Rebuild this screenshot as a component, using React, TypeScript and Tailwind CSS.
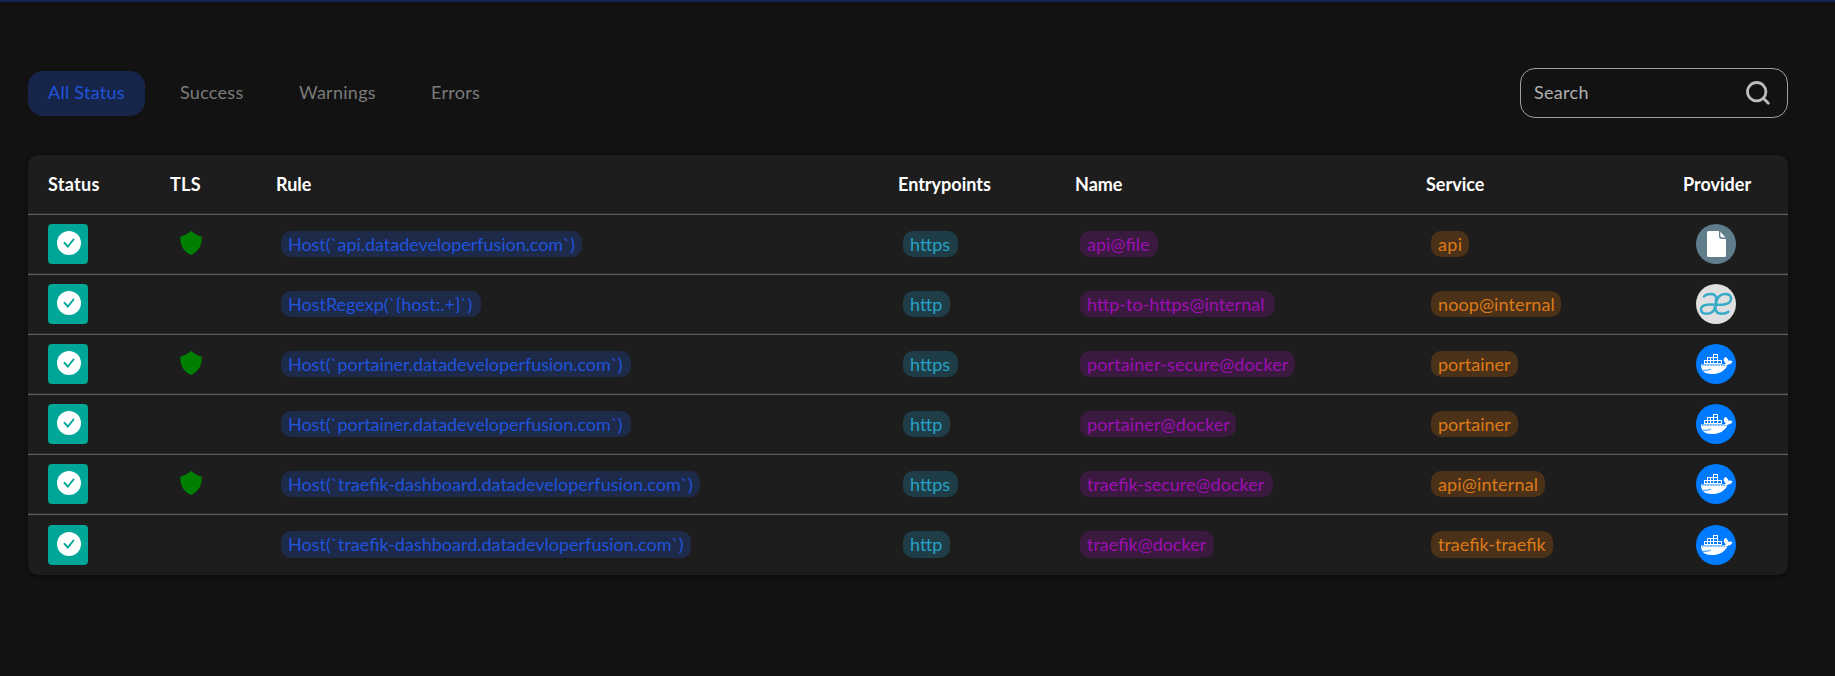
import React from "react";

const tabs = [
  { label: "All Status", cls: "w-[117px] pl-5 bg-[#18254b] text-[#1f55dc]" },
  { label: "Success", cls: "w-[103px] pl-5 text-[#7b7b7b]" },
  { label: "Warnings", cls: "w-[117px] pl-[21px] text-[#7b7b7b]" },
  { label: "Errors", cls: "w-[87px] pl-[21px] text-[#7b7b7b]" },
];

type Chip = [label: string, width: string];
type Row = { tls: boolean; rule: Chip; entry: Chip; name: Chip; service: Chip; provider: "file" | "internal" | "docker" };

const https: Chip = ["https", "w-[55px]"];
const http: Chip = ["http", "w-[47px]"];

const rows: Row[] = [
  { tls: true, rule: ["Host(`api.datadeveloperfusion.com`)", "w-[301px] tracking-[-0.05px]"], entry: https, name: ["api@file", "w-[78px]"], service: ["api", "w-[38px] tracking-[0.3px]"], provider: "file" },
  { tls: false, rule: ["HostRegexp(`{host:.+}`)", "w-[200px]"], entry: http, name: ["http-to-https@internal", "w-[195px]"], service: ["noop@internal", "w-[130px] tracking-[0.1px]"], provider: "internal" },
  { tls: true, rule: ["Host(`portainer.datadeveloperfusion.com`)", "w-[350px] tracking-[-0.07px]"], entry: https, name: ["portainer-secure@docker", "w-[215px] tracking-[0.1px]"], service: ["portainer", "w-[87px]"], provider: "docker" },
  { tls: false, rule: ["Host(`portainer.datadeveloperfusion.com`)", "w-[350px] tracking-[-0.07px]"], entry: http, name: ["portainer@docker", "w-[156px] tracking-[0.1px]"], service: ["portainer", "w-[87px]"], provider: "docker" },
  { tls: true, rule: ["Host(`traefik-dashboard.datadeveloperfusion.com`)", "w-[419px]"], entry: https, name: ["traefik-secure@docker", "w-[193px]"], service: ["api@internal", "w-[114px] tracking-[0.15px]"], provider: "docker" },
  { tls: false, rule: ["Host(`traefik-dashboard.datadevloperfusion.com`)", "w-[410px]"], entry: http, name: ["traefik@docker", "w-[134px]"], service: ["traefik-traefik", "w-[122px]"], provider: "docker" },
];

function Pill({ chip, tone }: { chip: Chip; tone: string }) {
  return (
    <div className="pl-[5px] group-last:pb-px">
      <span className={`flex h-[26px] items-center rounded-[10px] pl-[7px] whitespace-nowrap group-last:h-[27px] ${chip[1]} ${tone}`}>
        {chip[0]}
      </span>
    </div>
  );
}

const containers = [
  [17.5, 10.5],
  [11.5, 13.5], [14.5, 13.5], [17.5, 13.5],
  [8.5, 16.5], [11.5, 16.5], [14.5, 16.5], [17.5, 16.5], [21.5, 16.5],
];

function Provider({ kind }: { kind: Row["provider"] }) {
  if (kind === "file")
    return (
      <svg viewBox="0 0 40 40" className="size-10">
        <circle cx="20" cy="20" r="20" fill="#607d8b" />
        <path d="M12.500 7H23v5a3 3 0 0 0 3 3h4v16.500a1.500 1.500 0 0 1-1.500 1.500h-16a1.500 1.500 0 0 1-1.500-1.500v-23A1.500 1.500 0 0 1 12.500 7z" fill="#fff" />
        <path d="M24.300 7.800l5.200 5.700h-3.200a2 2 0 0 1-2-2z" fill="#fff" />
      </svg>
    );
  if (kind === "internal")
    return (
      <svg viewBox="0 0 40 40" className="size-10">
        <circle cx="20" cy="20" r="20" fill="#e0e0e0" />
        <path
          d="M8 12.500C11 9.300 19.500 8.800 20 13.500C20.300 16 19.500 21 18.800 24C17.700 28.500 13.500 29.700 10.500 29.700C6.500 29.700 5 28 5 25.500C5 21.500 9 20.500 14 20.500C20 20.500 24 21.500 29 20.300C33 19.500 35 17.500 35 14.500C35 11.500 32.500 10 29 10C23.500 10 20.800 14.500 19.800 20C18.700 26 20 29.700 25.500 29.700C28.500 29.700 31 29 32.500 27.700"
          fill="none" stroke="#37abc8" strokeWidth="2.500" strokeLinecap="round"
        />
      </svg>
    );
  return (
    <svg viewBox="0 0 40 40" className="size-10">
      <circle cx="20" cy="20" r="20" fill="#007bff" />
      {containers.map(([x, y]) => (
        <rect key={`${x}-${y}`} x={x} y={y} width={x > 17 ? 4 : 3} height="3" fill="none" stroke="#fff" strokeWidth="1" />
      ))}
      <path d="M5 20.500H27C28.500 20.500 29.500 20 29.700 19C27.500 17.500 27 15 29.300 13C31 13.500 32 15 32.300 16.800C34 16.300 35.500 16.700 36.500 17.500C35.500 19.500 34 20.300 32 20.500C28.500 27.500 23 30 16 30C8.500 30 5 27 5 20.500Z" fill="#fff" />
      <path d="M6 21.600H35" stroke="#007bff" strokeWidth=".7" strokeDasharray="1.600 1.100" />
      <path d="M7 26.300C10 26.500 13 26 15 25" stroke="#007bff" strokeWidth=".9" fill="none" />
    </svg>
  );
}

const grid = "grid grid-cols-[122px_106px_622px_177px_351px_257px_1fr] pl-5";
const line = "border-b border-[#5e5e5e] shadow-[inset_0_-1px_0_#2c2c2c]";

export default function App() {
  return (
    <div className="h-[676px] w-full overflow-hidden border-t-2 border-[#162452] bg-[#121212] pr-[47px] pl-7 font-[Lato,sans-serif] text-[18px]">
      <div className="mt-[66px] flex h-[50px] items-center justify-between">
        <nav className="flex gap-[15px]">
          {tabs.map((t) => (
            <button key={t.label} className={`flex h-[45px] items-center rounded-[15px] pb-0.5 tracking-[0.27px] whitespace-nowrap ${t.cls}`}>
              {t.label}
            </button>
          ))}
        </nav>
        <label className="flex h-[50px] w-[268px] items-center justify-between rounded-[15px] border border-[#a0a0a0] pr-[17px] pb-px pl-[13px] text-[#b0b0b0]">
          <span className="tracking-[0.3px]">Search</span>
          <svg viewBox="0 0 24 24" className="size-6" fill="none" stroke="#bcbcbc" strokeWidth="2.800">
            <circle cx="10.700" cy="10.700" r="9.200" />
            <path d="M17.300 17.300l5 5" strokeLinecap="round" />
          </svg>
        </label>
      </div>
      <div className="mt-[37px] h-[420px] rounded-[10px] bg-[#1d1d1d] shadow-[0_1px_5px_rgba(0,0,0,0.4)]">
        <div className={`${grid} ${line} h-[60px] items-center pb-px font-bold text-white`}>
          {["Status", "TLS", "Rule", "Entrypoints", "Name", "Service", "Provider"].map((h) => (
            <span key={h} className={h === "Status" || h === "TLS" ? "tracking-[0.3px]" : ""}>{h}</span>
          ))}
        </div>
        <div>
          {rows.map((r, i) => (
            <div key={i} className={`group ${grid} ${line} h-[60px] items-center pb-px last:border-0 last:pb-0 last:shadow-none`}>
              <svg viewBox="0 0 40 40" className="size-10">
                <rect width="40" height="40" rx="4" fill="#00a697" />
                <circle cx="21" cy="19" r="12" fill="#fff" />
                <path d="M16.500 18.800l3.300 3.700 5.700-7" fill="none" stroke="#00a697" strokeWidth="1.900" strokeLinecap="round" />
              </svg>
              <div className="pl-[10px]">
                {r.tls && (
                  <svg viewBox="0 0 22 24" className="mb-0.5 h-6 w-[22px]">
                    <path d="M11 0C14 2.600 18 4.600 21.500 5.500C22.500 14 18.500 20.500 11 24C3.500 20.500 -.500 14 .500 5.500C4 4.600 8 2.600 11 0Z" fill="#008000" />
                  </svg>
                )}
              </div>
              <Pill chip={r.rule} tone="bg-[#1e2a4a] text-[#2053da]" />
              <Pill chip={r.entry} tone="bg-[#1f3d46] text-[#27a2c6]" />
              <Pill chip={r.name} tone="bg-[#3b1a40] text-[#9c0fb0]" />
              <Pill chip={r.service} tone="bg-[#4a3118] text-[#dc7a18]" />
              <div className="pl-[13px]"><Provider kind={r.provider} /></div>
            </div>
          ))}
        </div>
      </div>
    </div>
  );
}
